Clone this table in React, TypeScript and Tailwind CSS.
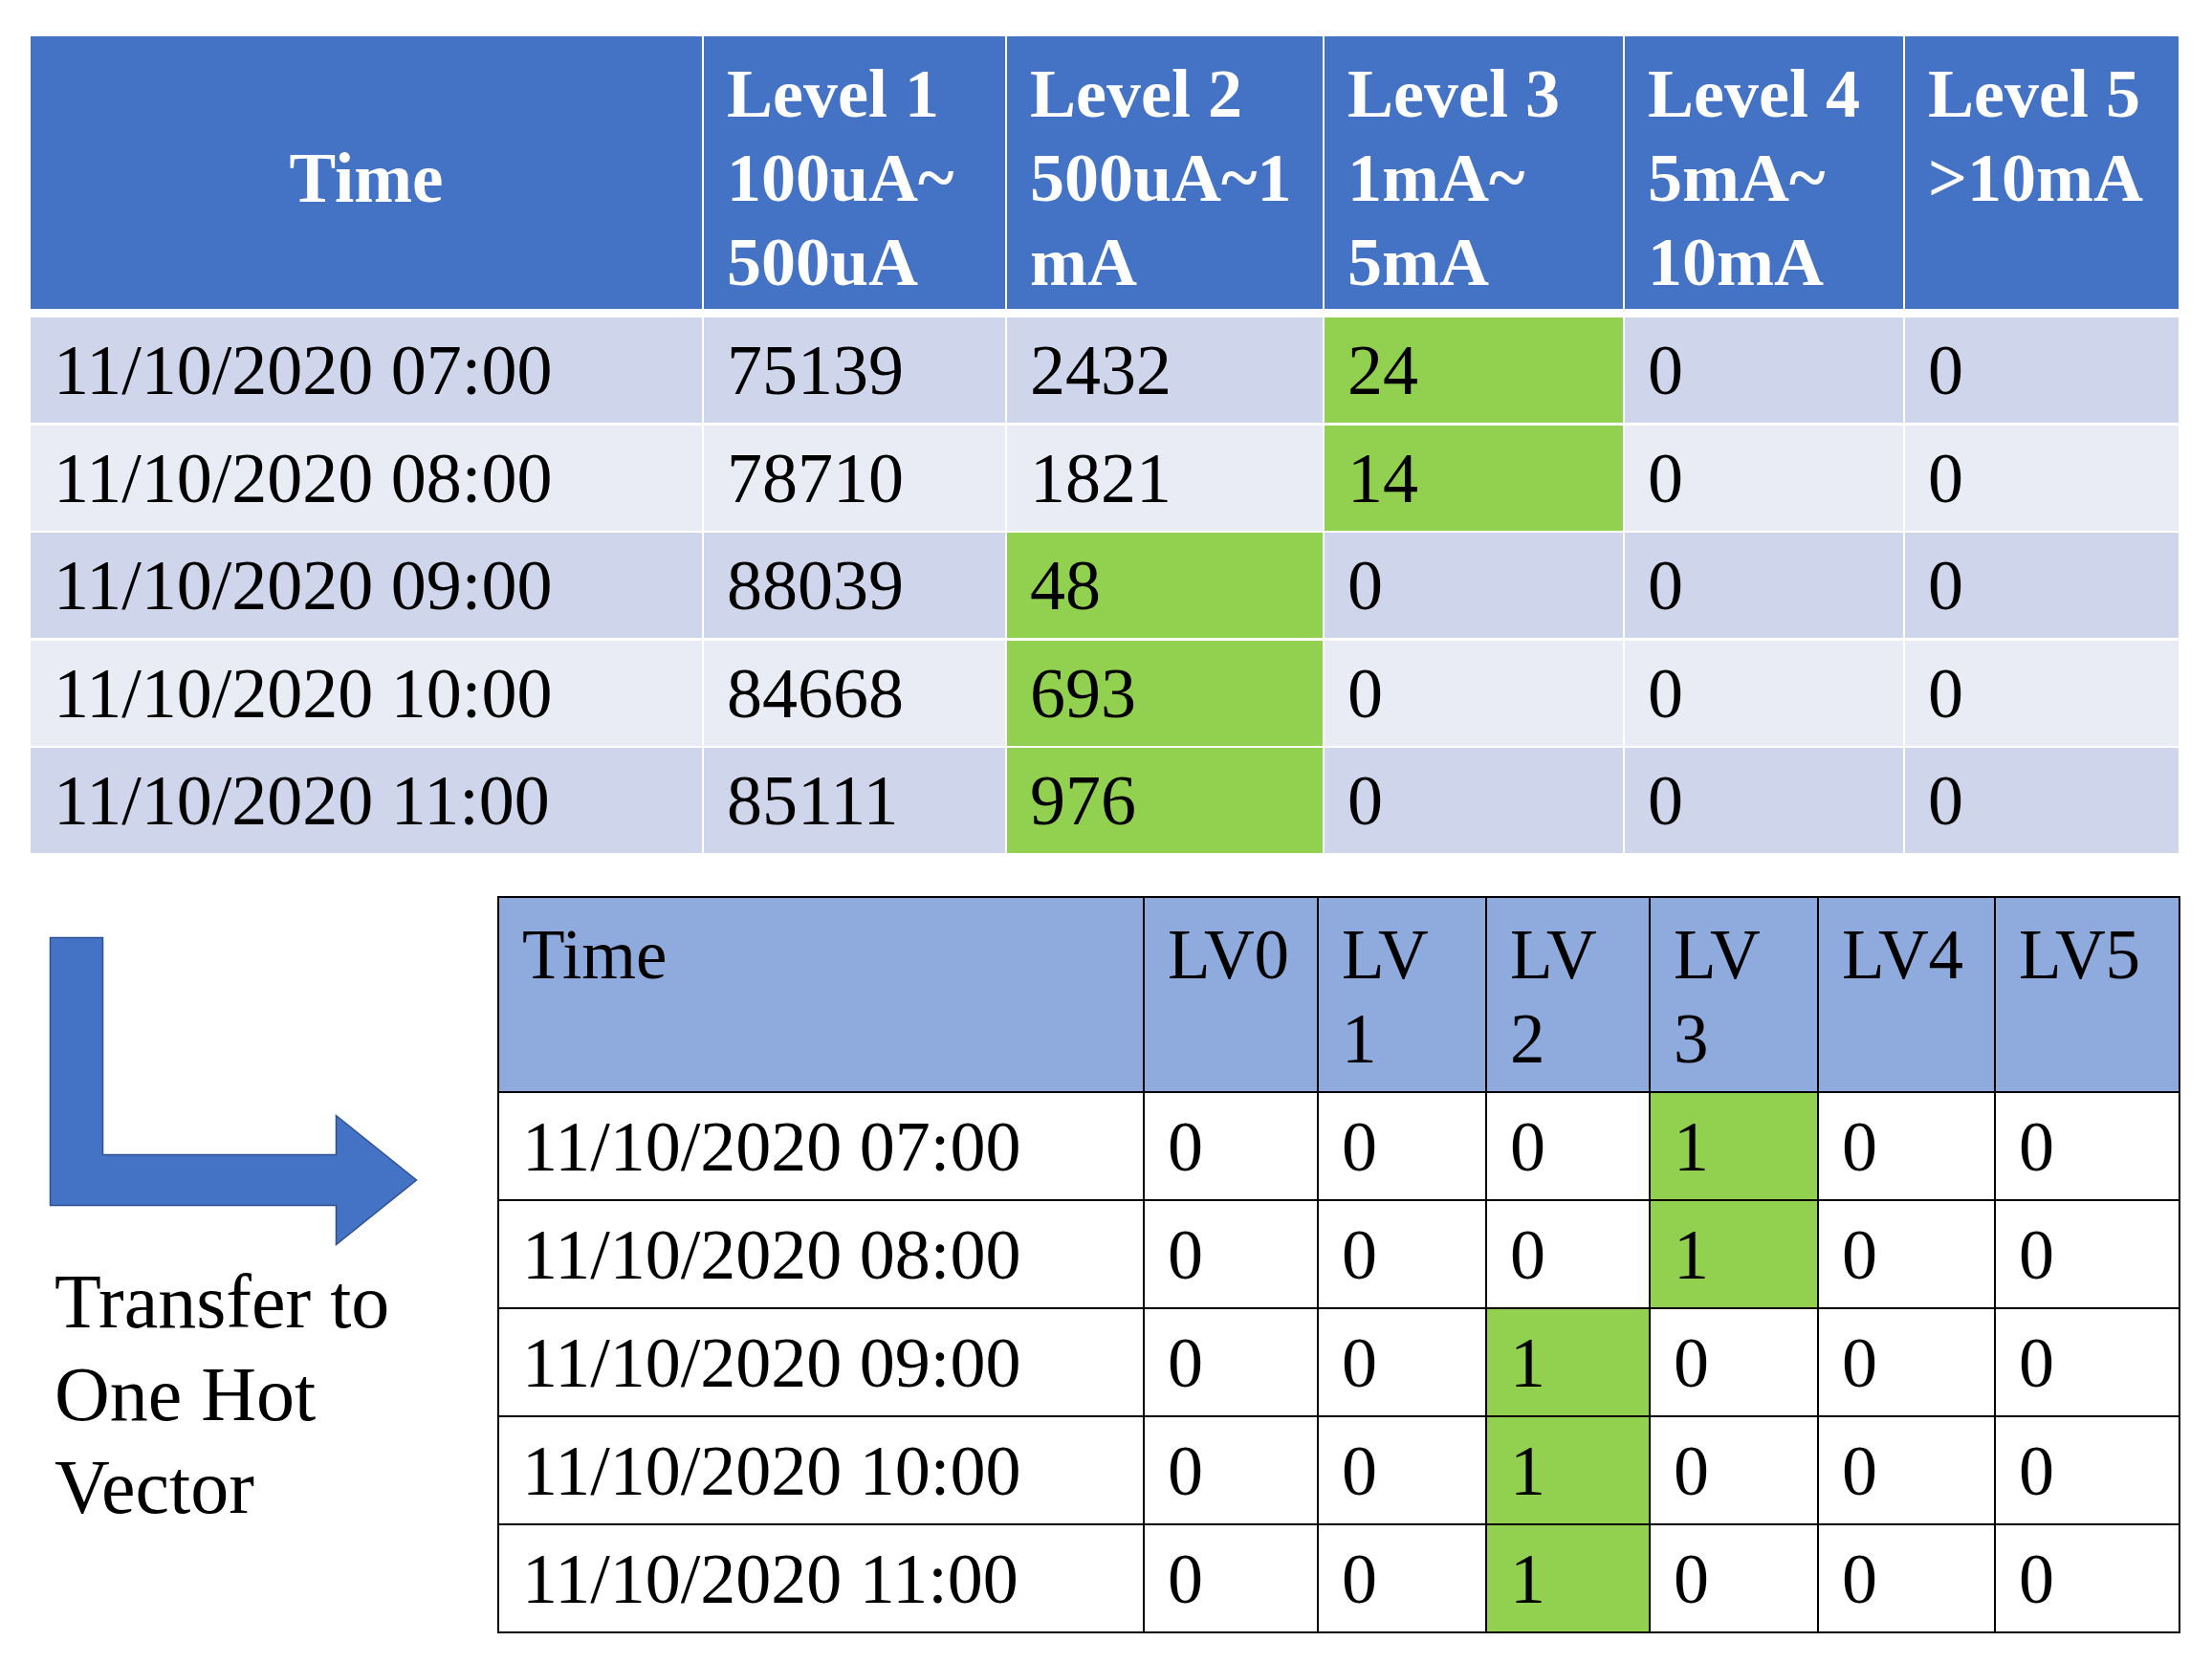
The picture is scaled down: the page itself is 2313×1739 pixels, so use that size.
import React from "react";

const topHeaders: string[][] = [
  ["Level 1", "100uA~", "500uA"],
  ["Level 2", "500uA~1", "mA"],
  ["Level 3", "1mA~", "5mA"],
  ["Level 4", "5mA~", "10mA"],
  ["Level 5", ">10mA"],
];

const topRows: { cells: string[]; green: number }[] = [
  { cells: ["11/10/2020 07:00", "75139", "2432", "24", "0", "0"], green: 3 },
  { cells: ["11/10/2020 08:00", "78710", "1821", "14", "0", "0"], green: 3 },
  { cells: ["11/10/2020 09:00", "88039", "48", "0", "0", "0"], green: 2 },
  { cells: ["11/10/2020 10:00", "84668", "693", "0", "0", "0"], green: 2 },
  { cells: ["11/10/2020 11:00", "85111", "976", "0", "0", "0"], green: 2 },
];

const bottomHeaders: string[][] = [
  ["Time"],
  ["LV0"],
  ["LV", "1"],
  ["LV", "2"],
  ["LV", "3"],
  ["LV4"],
  ["LV5"],
];

const bottomRows: { time: string; hot: number }[] = [
  { time: "11/10/2020 07:00", hot: 3 },
  { time: "11/10/2020 08:00", hot: 3 },
  { time: "11/10/2020 09:00", hot: 2 },
  { time: "11/10/2020 10:00", hot: 2 },
  { time: "11/10/2020 11:00", hot: 2 },
];

function Lines({ lines }: { lines: string[] }) {
  return (
    <>
      {lines.map((l, i) => (
        <div key={i}>{l}</div>
      ))}
    </>
  );
}

export default function App() {
  return (
    <div className="w-[2313px] h-[1739px] bg-white pt-[38px] pl-[32px] font-['Liberation_Serif',serif] text-black overflow-hidden">
      {/* Top table */}
      <div className="w-[2246px]">
        <div className="grid grid-cols-[702px_315px_330px_312px_291px_286px] gap-x-[2px] h-[285px]">
          <div className="bg-[#4472C4] flex items-center justify-center pt-[12px] text-white font-bold text-[73px] leading-[88px]">
            Time
          </div>
          {topHeaders.map((h, i) => (
            <div
              key={i}
              className="bg-[#4472C4] pl-[24px] pt-[16px] text-white font-bold text-[72px] leading-[88px] whitespace-nowrap"
            >
              <Lines lines={h} />
            </div>
          ))}
        </div>
        <div className="mt-[9px] flex flex-col gap-[2.5px]">
          {topRows.map((r, ri) => (
            <div
              key={ri}
              className="grid grid-cols-[702px_315px_330px_312px_291px_286px] gap-x-[2px] h-[110px]"
            >
              {r.cells.map((c, ci) => (
                <div
                  key={ci}
                  className={
                    "flex items-center pl-[24px] text-[74px] leading-[88px] whitespace-nowrap " +
                    (ci === r.green
                      ? "bg-[#92D050]"
                      : ri % 2 === 0
                      ? "bg-[#CFD5EA]"
                      : "bg-[#E9EBF5]")
                  }
                >
                  {c}
                </div>
              ))}
            </div>
          ))}
        </div>
      </div>

      {/* Bottom section */}
      <div className="mt-[45px] flex items-start">
        <div className="w-[488px] pt-[42px]">
          <svg
            className="block ml-[19px]"
            width="386"
            height="324"
            viewBox="-1.5 -1.5 386 324"
          >
            <path
              d="M0 0 H55 V227 H299 V186 L383 253.5 L299 321 V280 H0 Z"
              fill="#4472C4"
              stroke="#2F528F"
              strokeWidth="1.5"
            />
          </svg>
          <div className="mt-[10px] ml-[25px] text-[80px] leading-[97px] whitespace-nowrap">
            <div>Transfer to</div>
            <div>One Hot</div>
            <div>Vector</div>
          </div>
        </div>

        <div className="w-[1760px] bg-black p-[2px] grid grid-cols-[673px_180px_174px_169px_174px_183px_191px] grid-rows-[202px_111px_111px_111px_111px_111px] gap-[2px] text-[74px] leading-[88px]">
          {bottomHeaders.map((h, i) => (
            <div key={"h" + i} className="bg-[#8FAADC] pl-[24px] pt-[16px] text-[73px] whitespace-nowrap">
              <Lines lines={h} />
            </div>
          ))}
          {bottomRows.map((r, ri) => (
            <React.Fragment key={ri}>
              <div className="bg-white flex items-center pl-[24px] whitespace-nowrap">{r.time}</div>
              {[0, 1, 2, 3, 4, 5].map((lv) => (
                <div
                  key={lv}
                  className={
                    "flex items-center pl-[24px] " +
                    (lv === r.hot ? "bg-[#92D050]" : "bg-white")
                  }
                >
                  {lv === r.hot ? "1" : "0"}
                </div>
              ))}
            </React.Fragment>
          ))}
        </div>
      </div>
    </div>
  );
}
